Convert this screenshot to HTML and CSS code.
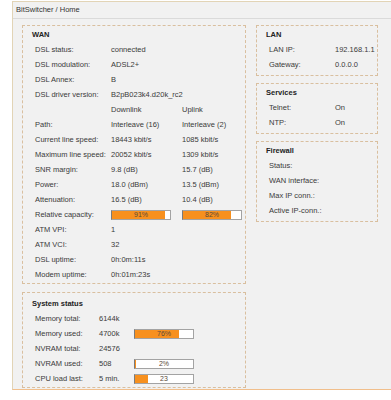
FILE: index.html
```html
<!DOCTYPE html>
<html>
<head>
<meta charset="utf-8">
<link rel="stylesheet" href="styles.css">
</head>
<body>
<div class="frame">
  <div class="header">BitSwitcher / Home</div>
  <div class="content">
    <div class="col-left">
      <div class="box box-wan">
        <div class="title">WAN</div>
        <div class="grid wan">
          <span>DSL status:</span><span class="span2">connected</span>
          <span>DSL modulation:</span><span class="span2">ADSL2+</span>
          <span>DSL Annex:</span><span class="span2">B</span>
          <span>DSL driver version:</span><span class="span2">B2pB023k4.d20k_rc2</span>
          <span></span><span>Downlink</span><span>Uplink</span>
          <span>Path:</span><span>Interleave (16)</span><span>Interleave (2)</span>
          <span>Current line speed:</span><span>18443 kbit/s</span><span>1085 kbit/s</span>
          <span>Maximum line speed:</span><span>20052 kbit/s</span><span>1309 kbit/s</span>
          <span>SNR margin:</span><span>9.8 (dB)</span><span>15.7 (dB)</span>
          <span>Power:</span><span>18.0 (dBm)</span><span>13.5 (dBm)</span>
          <span>Attenuation:</span><span>16.5 (dB)</span><span>10.4 (dB)</span>
          <span>Relative capacity:</span>
          <span class="cell"><span class="bar"><span class="fill" style="width:91%"></span><span class="pct">91%</span></span></span>
          <span class="cell"><span class="bar"><span class="fill" style="width:82%"></span><span class="pct">82%</span></span></span>
          <span>ATM VPI:</span><span class="span2">1</span>
          <span>ATM VCI:</span><span class="span2">32</span>
          <span>DSL uptime:</span><span class="span2">0h:0m:11s</span>
          <span>Modem uptime:</span><span class="span2">0h:01m:23s</span>
        </div>
      </div>
      <div class="box box-sys">
        <div class="title">System status</div>
        <div class="grid sys">
          <span>Memory total:</span><span class="span2">6144k</span>
          <span>Memory used:</span><span>4700k</span>
          <span class="cell"><span class="bar"><span class="fill" style="width:76%"></span><span class="pct">76%</span></span></span>
          <span>NVRAM total:</span><span class="span2">24576</span>
          <span>NVRAM used:</span><span>508</span>
          <span class="cell"><span class="bar"><span class="fill" style="width:2%"></span><span class="pct">2%</span></span></span>
          <span>CPU load last:</span><span>5 min.</span>
          <span class="cell"><span class="bar"><span class="fill" style="width:23%"></span><span class="pct">23</span></span></span>
        </div>
      </div>
    </div>
    <div class="col-right">
      <div class="box">
        <div class="title">LAN</div>
        <div class="grid side">
          <span>LAN IP:</span><span>192.168.1.1</span>
          <span>Gateway:</span><span>0.0.0.0</span>
        </div>
      </div>
      <div class="box">
        <div class="title">Services</div>
        <div class="grid side">
          <span>Telnet:</span><span>On</span>
          <span>NTP:</span><span>On</span>
        </div>
      </div>
      <div class="box">
        <div class="title">Firewall</div>
        <div class="grid side">
          <span>Status:</span><span></span>
          <span>WAN interface:</span><span></span>
          <span>Max IP conn.:</span><span></span>
          <span>Active IP-conn.:</span><span></span>
        </div>
      </div>
    </div>
  </div>
</div>
</body>
</html>
```
FILE: styles.css
```css
html, body {
  margin: 0;
  padding: 0;
  background: #ffffff;
  overflow: hidden;
}
body {
  font-family: "Liberation Sans", Arial, sans-serif;
  font-size: 7.5px;
  color: #3a3a3a;
}
.frame {
  margin: 1px 0 0 12px;
  width: 395px;
  background: #f1f1f1;
  border: 1px solid #e2d4b6;
  border-bottom-color: #f1bf8c;
  border-right: none;
  padding-bottom: 1px;
}
.header {
  height: 16px;
  line-height: 16px;
  padding-left: 3px;
  color: #333;
  border-bottom: 1px solid #dadada;
}
.content {
  display: flex;
  gap: 10px;
  padding: 6px 0 0 9px;
  align-items: flex-start;
}
.col-left {
  width: 224px;
  display: flex;
  flex-direction: column;
  gap: 8px;
}
.col-right {
  width: 122px;
  display: flex;
  flex-direction: column;
  gap: 7px;
}
.box {
  border: 1px dashed #d9bf9f;
  padding: 1px 0 3px 9px;
}
.box-wan {
  padding-bottom: 1px;
}
.box-sys {
  padding-top: 3px;
  padding-bottom: 1px;
}
.title {
  height: 15px;
  line-height: 15px;
  font-weight: bold;
  color: #222;
}
.grid {
  display: grid;
  grid-auto-rows: 15px;
  line-height: 15px;
  padding-left: 3px;
  white-space: nowrap;
}
.wan {
  grid-template-columns: 76px 71px 1fr;
}
.sys {
  grid-template-columns: 64px 35px 1fr;
}
.side {
  grid-template-columns: 66px 1fr;
}
.span2 {
  grid-column: span 2;
}
.cell {
  display: flex;
  align-items: center;
}
.bar {
  display: grid;
  width: 58px;
  height: 8px;
  border: 1px solid #a3a3a3;
  border-left-color: #7a7a7a;
  background: #ffffff;
}
.bar > span {
  grid-area: 1 / 1;
}
.fill {
  height: 100%;
  background: #f7901e;
}
.pct {
  text-align: center;
  line-height: 8px;
  font-size: 7px;
  color: #5a4a3a;
}
```
